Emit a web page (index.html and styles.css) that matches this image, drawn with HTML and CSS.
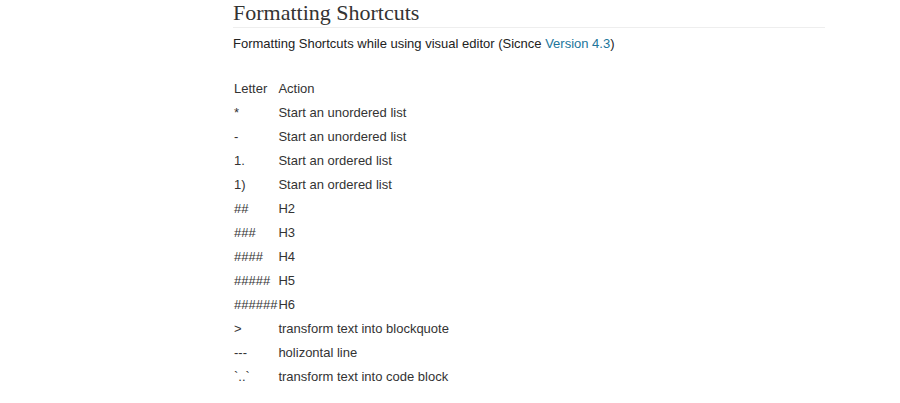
FILE: index.html
```html
<!DOCTYPE html>
<html>
<head>
<meta charset="utf-8">
<link rel="stylesheet" href="styles.css">
</head>
<body>
<div class="post">
  <h2 class="title">Formatting Shortcuts</h2>
  <p class="desc">Formatting Shortcuts while using visual editor (Sicnce <a href="#">Version 4.3</a>)</p>
  <table class="shortcuts">
    <tr><td class="key">Letter</td><td>Action</td></tr>
    <tr><td class="key">*</td><td>Start an unordered list</td></tr>
    <tr><td class="key">-</td><td>Start an unordered list</td></tr>
    <tr><td class="key">1.</td><td>Start an ordered list</td></tr>
    <tr><td class="key">1)</td><td>Start an ordered list</td></tr>
    <tr><td class="key">##</td><td>H2</td></tr>
    <tr><td class="key">###</td><td>H3</td></tr>
    <tr><td class="key">####</td><td>H4</td></tr>
    <tr><td class="key">#####</td><td>H5</td></tr>
    <tr><td class="key">######</td><td>H6</td></tr>
    <tr><td class="key">&gt;</td><td>transform text into blockquote</td></tr>
    <tr><td class="key">---</td><td>holizontal line</td></tr>
    <tr><td class="key">`..`</td><td>transform text into code block</td></tr>
  </table>
</div>
</body>
</html>
```
FILE: styles.css
```css
html, body { margin: 0; padding: 0; background: #fff; }
body { font-family: "Liberation Sans", Arial, sans-serif; font-size: 13px; color: #333; }
.post { margin-left: 233px; width: 592px; padding-top: 1px; }
.title {
  font-family: "Liberation Serif", "Times New Roman", serif;
  font-weight: normal;
  font-size: 22px;
  line-height: 24px;
  color: #333;
  margin: 0;
  padding-bottom: 2px;
  border-bottom: 1px solid #eee;
}
.desc { margin: 7px 0 0; line-height: 18px; color: #222; }
.desc a { color: #21759b; text-decoration: none; }
.shortcuts { border-collapse: separate; border-spacing: 0; margin-top: 24px; margin-left: 1px; }
.shortcuts td { padding: 0; height: 24px; line-height: 24px; vertical-align: middle; }
.shortcuts td.key { padding-right: 1px; }
```
